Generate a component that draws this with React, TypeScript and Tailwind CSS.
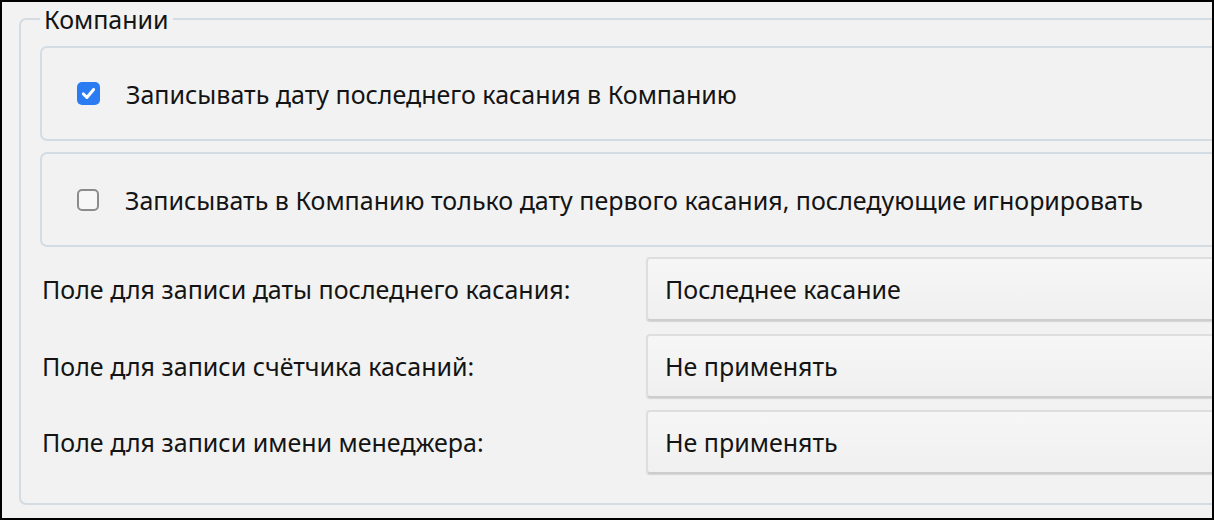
import React from "react";

function Checkbox({ checked }: { checked: boolean }) {
  if (checked) {
    return (
      <span className="flex h-[23px] w-[23px] shrink-0 items-center justify-center rounded-[5px] bg-[#2b7bf3]">
        <svg width="17" height="17" viewBox="0 0 16 16" fill="none">
          <path d="M3.2 8.4 L6.5 11.8 L12.8 4.2" stroke="white" strokeWidth="2.8" strokeLinecap="round" strokeLinejoin="round" />
        </svg>
      </span>
    );
  }
  return <span className="block h-[22px] w-[22px] shrink-0 rounded-[5px] border-2 border-[#8c8c8c] bg-[#f7f7f7]" />;
}

function OptionBox({ checked, label, className }: { checked: boolean; label: string; className?: string }) {
  return (
    <div className={"flex h-[95px] w-[1300px] items-center rounded-[7px] border-2 border-[#d3dce3] pl-[35px] " + (className ?? "")}>
      <Checkbox checked={checked} />
      <span className="ml-[26px] whitespace-nowrap text-[25px] leading-[30px]">{label}</span>
    </div>
  );
}

function FieldRow({ label, value, className }: { label: string; value: string; className?: string }) {
  return (
    <div className={"flex items-center " + (className ?? "")}>
      <div className="w-[606px] shrink-0 whitespace-nowrap pl-[2px] text-[25px] leading-[30px]">{label}</div>
      <div className="flex h-[64px] w-[700px] shrink-0 items-center rounded-[4px] border-2 border-[#dedede] border-b-[#cdcdcd] bg-gradient-to-b from-[#f6f6f6] to-[#f0f0f0] pl-[17px] text-[25px] leading-[30px] shadow-[0_1px_1px_rgba(0,0,0,0.12)]">
        {value}
      </div>
    </div>
  );
}

export default function App() {
  return (
    <div className="h-[520px] w-[1214px] overflow-hidden border-2 border-black bg-[#f2f2f2] font-['Noto_Sans',sans-serif] text-[#141414]">
      <fieldset className="ml-[17px] mt-[2px] w-[1400px] rounded-[7px] border-2 border-[#d3dce3] pb-[29px] pl-[19px] pt-[12px]">
        <legend className="px-[4px] text-[25px] leading-[30px]">Компании</legend>
        <OptionBox checked label="Записывать дату последнего касания в Компанию" />
        <OptionBox checked={false} className="mt-[11px]" label="Записывать в Компанию только дату первого касания, последующие игнорировать" />
        <FieldRow className="mt-[10px]" label="Поле для записи даты последнего касания:" value="Последнее касание" />
        <FieldRow className="mt-[13px]" label="Поле для записи счётчика касаний:" value="Не применять" />
        <FieldRow className="mt-[12px]" label="Поле для записи имени менеджера:" value="Не применять" />
      </fieldset>
    </div>
  );
}
